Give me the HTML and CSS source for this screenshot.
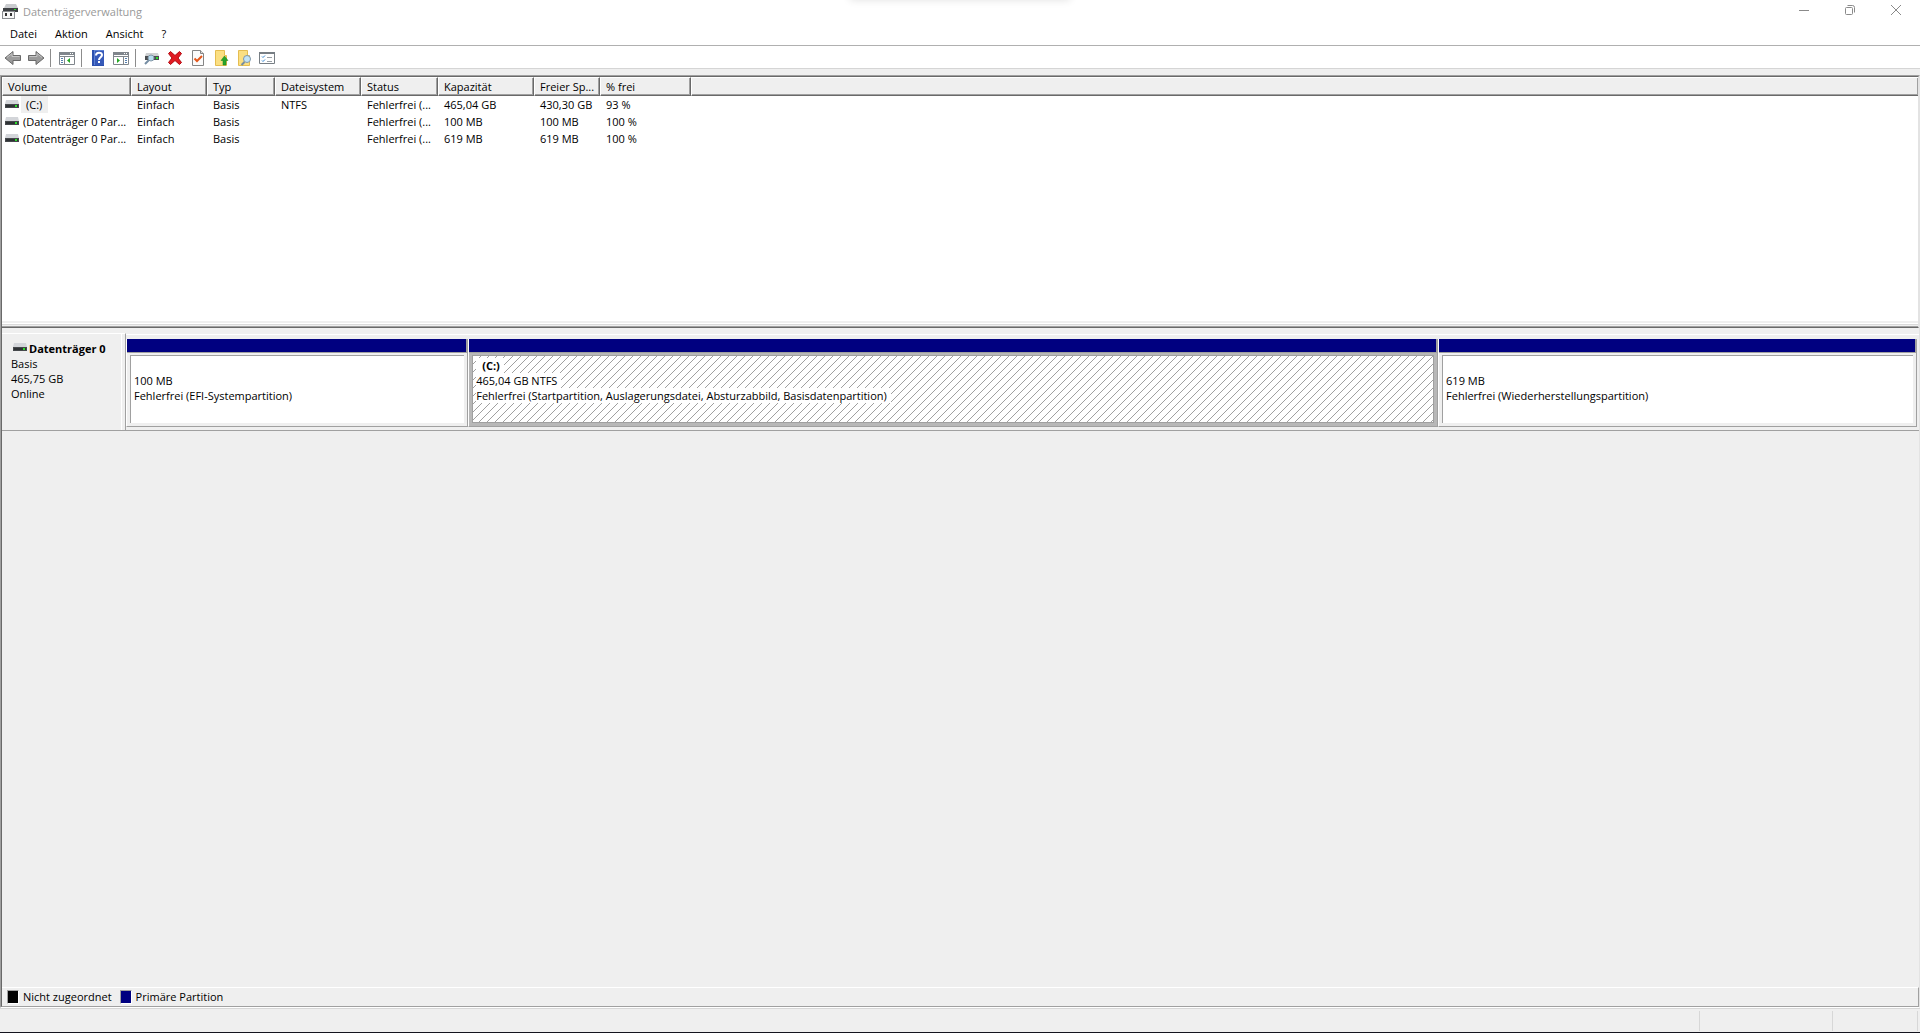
FILE: index.html
```html
<!DOCTYPE html>
<html lang="de">
<head>
    <meta charset="UTF-8">
    <meta name="viewport" content="width=device-width, initial-scale=1.0">
    <title>Datenträgerverwaltung</title>
    <link rel="stylesheet" href="styles.css">
</head>
<body>

    <!-- Shared disk symbol -->
    <svg class="symbols" width="0" height="0" aria-hidden="true">
        <symbol id="disk" viewBox="0 0 14 8">
            <path fill="#d3d5d9" d="M1 0h12l1 4H0z"/>
            <path fill="#46494c" d="M0 4h14v4H0z"/>
            <path fill="#2f3235" d="M1 5h12v2H1z"/>
            <path fill="#2be02b" d="M10 5h2v2h-2z"/>
        </symbol>
    </svg>

    <header class="title-bar">
        <svg class="app-icon" viewBox="0 0 16 16" aria-hidden="true">
            <path fill="#c9cbce" d="M4 0h10l2 4H2z"/>
            <path fill="#3e4144" d="M1 4h15v4H1z"/>
            <path fill="#2be02b" d="M12 5h2v1h-2z"/>
            <path fill="#8a8d90" d="M0 7h13v8H0z"/>
            <path fill="#f7f7f7" d="M1 8h11v6H1z"/>
            <path fill="#333" d="M3 9h2v3H3zM8 9h2v3H8z"/>
        </svg>
        <span class="title">Datenträgerverwaltung</span>
        <span class="title-shadow"></span>
        <div class="window-buttons">
            <button aria-label="Minimieren"><svg viewBox="0 0 12 12"><path d="M1 6.500h10"/></svg></button>
            <button aria-label="Verkleinern"><svg viewBox="0 0 12 12"><rect x="1.500" y="3.500" width="7" height="7" rx="1"/><path d="M3.500 1.500h5a2 2 0 0 1 2 2v5"/></svg></button>
            <button aria-label="Schließen"><svg viewBox="0 0 12 12"><path d="M1 1l10 10M11 1L1 11"/></svg></button>
        </div>
    </header>

    <nav class="menu-bar">
        <button>Datei</button>
        <button>Aktion</button>
        <button>Ansicht</button>
        <button>?</button>
    </nav>

    <div class="toolbar">
        <button aria-label="Zurück"><svg class="wide" viewBox="0 0 18 16"><path fill="#9b9b9b" stroke="#696969" d="M1 8l8-6.500v4h7.500v5H9v4z"/><path fill="none" stroke="#c4c4c4" d="M3 7.500l5-4v3h7.500"/></svg></button>
        <button aria-label="Vorwärts"><svg class="wide" viewBox="0 0 18 16"><path fill="#9b9b9b" stroke="#696969" d="M17 8L9 1.500v4H1.500v5H9v4z"/><path fill="none" stroke="#c4c4c4" d="M2.500 6.500H10v-3l5 4"/></svg></button>
        <span class="divider"></span>
        <button aria-label="Konsolenstruktur"><svg viewBox="0 0 16 16"><path fill="#fff" stroke="#80868c" d="M.5 2.500h15v12H.5z"/><path fill="#80868c" d="M0 2h16v3H0zM0 6h16v1H0zM5 7h1v8H5z"/><path fill="#fff" d="M11 3h1v1h-1zM13 3h1v1h-1z"/><path fill="#557fae" d="M2 8h2v1H2zM2 10h2v1H2zM2 12h2v1H2z"/><path fill="#23a823" d="M8 10.500L11 8v5z"/></svg></button>
        <span class="divider"></span>
        <button aria-label="Hilfe"><svg viewBox="0 0 16 16"><path fill="#2c50ae" d="M2 0h12v16H2z"/><path fill="#5b80d4" d="M4 0h10v15H4z"/><path fill="#3659b8" d="M5 1h9v14H5z"/><path fill="none" stroke="#fff" stroke-width="2" d="M6 5.500C6 1.500 12 2 12 5c0 2-3 2.500-3 5"/><path fill="#fff" d="M8 11h2v2H8z"/></svg></button>
        <button aria-label="Aktionsbereich"><svg viewBox="0 0 16 16"><path fill="#fff" stroke="#80868c" d="M.5 2.500h15v12H.5z"/><path fill="#80868c" d="M0 2h16v3H0zM0 6h16v1H0zM10 7h1v8h-1z"/><path fill="#fff" d="M11 3h1v1h-1zM13 3h1v1h-1z"/><path fill="#557fae" d="M12 8h2v1h-2zM12 10h2v1h-2zM12 12h2v1h-2z"/><path fill="#23a823" d="M7 10.500L4 8v5z"/></svg></button>
        <span class="divider"></span>
        <button aria-label="Datenträger prüfen"><svg viewBox="0 0 16 16"><path fill="#cfd1d3" d="M2 3h12l1 3H1z"/><path fill="#4a4d50" d="M1 6h14v4H1z"/><path fill="#2be02b" d="M12 7h2v2h-2z"/><path stroke="#758da3" stroke-width="2" d="M5 10l-4 4"/><circle cx="7" cy="8" r="3" fill="#b6dcf0" stroke="#8296a6"/></svg></button>
        <button aria-label="Löschen"><svg viewBox="0 0 16 16"><path fill="#e11a22" stroke="#b30910" d="M3.500 1.500L8 5.500l4.500-4 2 2L11 8l3.500 4.500-2 2L8 10.500l-4.500 4-2-2L5 8 1.500 3.500z"/></svg></button>
        <button aria-label="Eigenschaften"><svg viewBox="0 0 16 16"><path fill="#fbfbfb" stroke="#858585" d="M2.500.5h8l3 3v12h-11z"/><path fill="#ddd" stroke="#858585" d="M10.500.5v3h3"/><path fill="none" stroke="#e4571b" stroke-width="2" d="M4.500 8.500l2.500 2.500 5-5"/></svg></button>
        <button aria-label="Übergeordneter Ordner"><svg viewBox="0 0 16 16"><path fill="#fbdf82" stroke="#e5bd50" d="M2.500.5h9v5h2v10h-11z"/><path fill="#28a52b" stroke="#12851a" stroke-width=".5" d="M11.500 6l3.500 4.500h-2V15h-3v-4.500H8z"/></svg></button>
        <button aria-label="Ordner durchsuchen"><svg viewBox="0 0 16 16"><path fill="#fbdf82" stroke="#e5bd50" d="M2.500.5h9v5h2v10h-11z"/><path stroke="#758da3" stroke-width="2" d="M8.500 12L5.500 15"/><circle cx="11" cy="9" r="3.500" fill="#c3e4f6" stroke="#8197a8"/></svg></button>
        <button aria-label="Optionen"><svg viewBox="0 0 16 16"><path fill="#fff" stroke="#777e84" d="M.5 2.500h15v11H.5z"/><path fill="#777e84" d="M0 2h16v2H0z"/><path fill="none" stroke="#3386d1" d="M3 6.500l1 1 2-2M3 10.500l1 1 2-2"/><path fill="#999fa5" d="M8 7h5v1H8zM8 11h5v1H8z"/></svg></button>
    </div>

    <main class="console">
        <section class="volume-pane">
            <table class="volumes">
                <colgroup>
                    <col class="col-volume">
                    <col class="col-layout">
                    <col class="col-type">
                    <col class="col-fs">
                    <col class="col-status">
                    <col class="col-capacity">
                    <col class="col-free">
                    <col class="col-percent">
                    <col>
                </colgroup>
                <thead>
                    <tr>
                        <th>Volume</th>
                        <th>Layout</th>
                        <th>Typ</th>
                        <th>Dateisystem</th>
                        <th>Status</th>
                        <th>Kapazität</th>
                        <th>Freier Sp...</th>
                        <th>% frei</th>
                        <td class="filler"></td>
                    </tr>
                </thead>
                <tbody>
                    <tr>
                        <td class="name"><svg class="disk"><use href="#disk"/></svg><span class="selected">(C:)</span></td>
                        <td>Einfach</td>
                        <td>Basis</td>
                        <td>NTFS</td>
                        <td>Fehlerfrei (...</td>
                        <td>465,04 GB</td>
                        <td>430,30 GB</td>
                        <td>93 %</td>
                        <td></td>
                    </tr>
                    <tr>
                        <td class="name"><svg class="disk"><use href="#disk"/></svg><span>(Datenträger 0 Par...</span></td>
                        <td>Einfach</td>
                        <td>Basis</td>
                        <td></td>
                        <td>Fehlerfrei (...</td>
                        <td>100 MB</td>
                        <td>100 MB</td>
                        <td>100 %</td>
                        <td></td>
                    </tr>
                    <tr>
                        <td class="name"><svg class="disk"><use href="#disk"/></svg><span>(Datenträger 0 Par...</span></td>
                        <td>Einfach</td>
                        <td>Basis</td>
                        <td></td>
                        <td>Fehlerfrei (...</td>
                        <td>619 MB</td>
                        <td>619 MB</td>
                        <td>100 %</td>
                        <td></td>
                    </tr>
                </tbody>
            </table>
            <div class="splitter"></div>
        </section>

        <section class="disk-pane">
            <div class="disk-row">
                <div class="disk-label">
                    <div class="disk-name"><svg class="disk"><use href="#disk"/></svg><b>Datenträger 0</b></div>
                    <div>Basis</div>
                    <div>465,75 GB</div>
                    <div>Online</div>
                </div>
                <div class="partitions">
                    <div class="partition efi">
                        <div class="bar"></div>
                        <div class="body">
                            <div class="box">
                                <p>100 MB</p>
                                <p>Fehlerfrei (EFI-Systempartition)</p>
                            </div>
                        </div>
                    </div>
                    <div class="partition system active">
                        <div class="bar"></div>
                        <div class="body">
                            <div class="box">
                                <p class="letter"><b>(C:)</b></p>
                                <p>465,04 GB NTFS</p>
                                <p>Fehlerfrei (Startpartition, Auslagerungsdatei, Absturzabbild, Basisdatenpartition)</p>
                            </div>
                        </div>
                    </div>
                    <div class="partition recovery">
                        <div class="bar"></div>
                        <div class="body">
                            <div class="box">
                                <p>619 MB</p>
                                <p>Fehlerfrei (Wiederherstellungspartition)</p>
                            </div>
                        </div>
                    </div>
                </div>
            </div>
            <div class="legend">
                <span class="swatch unallocated"></span><span class="legend-text">Nicht zugeordnet</span>
                <span class="swatch primary"></span><span class="legend-text">Primäre Partition</span>
            </div>
        </section>
    </main>

    <footer class="status-bar">
        <span class="status-main"></span>
        <span class="status-mid"></span>
        <span class="status-end"></span>
    </footer>

</body>
</html>
```
FILE: styles.css
```css
* {
    box-sizing: border-box;
}

body {
    height: 100vh;
    margin: 0;
    overflow: hidden;
    display: flex;
    flex-direction: column;
    background: #efefef;
    color: #000;
    font-family: 'Open Sans', 'Noto Sans', sans-serif;
    font-size: 11px;
    line-height: 15px;
}

button {
    border: none;
    padding: 0;
    background: none;
    color: inherit;
    font: inherit;
}

p {
    margin: 0;
}

.symbols {
    position: absolute;
}

/* Title bar */
.title-bar {
    display: flex;
    align-items: center;
    height: 23px;
    padding: 0 1px 0 2px;
    background: #fff;
    color: #999;
}

.app-icon {
    width: 16px;
    height: 16px;
    margin-right: 5px;
}

.title-shadow {
    position: absolute;
    top: -10px;
    left: 50%;
    width: 220px;
    height: 10px;
    margin-left: -110px;
    box-shadow: 0 0 8px rgba(0, 0, 0, 0.12);
}

.window-buttons {
    display: flex;
    margin-left: auto;
}

.window-buttons button {
    width: 46px;
    height: 23px;
    display: flex;
    align-items: center;
    justify-content: center;
    padding-bottom: 3px;
}

.window-buttons svg {
    width: 12px;
    height: 12px;
    fill: none;
    stroke: #8a8a8a;
}

/* Menu */
.menu-bar {
    display: flex;
    gap: 18px;
    height: 23px;
    padding: 0 10px 1px;
    background: #fff;
    border-bottom: 1px solid #b0b0b0;
}

/* Toolbar */
.toolbar {
    display: flex;
    align-items: center;
    height: 23px;
    padding: 2px 1px 0;
    background: #fff;
    border-bottom: 1px solid #d5d5d5;
}

.toolbar button {
    display: flex;
    justify-content: center;
    width: 23px;
}

.toolbar svg {
    width: 16px;
    height: 16px;
}

.toolbar .wide {
    width: 18px;
}

.divider {
    width: 1px;
    height: 18px;
    margin: 0 4px 0 3px;
    background: #8c8c8c;
}

/* Console frame */
.console {
    flex: 1;
    display: flex;
    flex-direction: column;
    margin-top: 6px;
    border: 1px solid #a0a0a0;
    border-right-color: #e3e3e3;
    border-bottom-color: #fff;
}

.volume-pane {
    display: flex;
    flex-direction: column;
    height: 252px;
    background: #fff;
    border: 1px solid #696969;
    border-right-color: #e3e3e3;
}

.volumes {
    width: 100%;
    table-layout: fixed;
    border-collapse: separate;
    border-spacing: 0;
}

.col-volume { width: 129px; }
.col-layout { width: 76px; }
.col-type { width: 68px; }
.col-fs { width: 86px; }
.col-status { width: 77px; }
.col-capacity { width: 96px; }
.col-free { width: 66px; }
.col-percent { width: 91px; }

.volumes th,
.volumes .filler {
    height: 19px;
    padding: 0 0 1px 5px;
    background: #efefef;
    border-top: 1px solid #fff;
    border-left: 1px solid #fff;
    border-right: 1px solid #696969;
    border-bottom: 1px solid #696969;
    box-shadow: inset -1px -1px #a0a0a0;
    font-weight: normal;
    text-align: left;
    white-space: nowrap;
}

.volumes .filler {
    border-right: none;
}

.volumes tbody td {
    height: 17px;
    padding: 0 0 0 6px;
    white-space: nowrap;
}

.volumes tbody .name {
    display: flex;
    align-items: center;
    padding-left: 3px;
}

.disk {
    width: 14px;
    height: 8px;
    margin-right: 4px;
}

.name .selected {
    padding: 1px 6px 1px 5px;
    margin-left: -2px;
    background: #efefef;
}

.name .disk {
    margin-bottom: 1px;
}

.splitter {
    height: 6px;
    margin-top: auto;
    background: linear-gradient(#efefef 2px, #fff 2px, #fff 3px, #dadada 3px, #dadada 4px, #efefef 4px);
    border-bottom: 1px solid #a0a0a0;
}

/* Graphical view */
.disk-pane {
    flex: 1;
    display: flex;
    flex-direction: column;
    padding-top: 5px;
    border-left: 1px solid #696969;
    border-bottom: 1px solid #a0a0a0;
}

.disk-row {
    display: flex;
    height: 98px;
}

.disk-label {
    width: 124px;
    padding: 7px 0 0 9px;
    border-top: 1px solid #fff;
    border-right: 1px solid #a0a0a0;
    border-bottom: 1px solid #a0a0a0;
    box-shadow: inset -3px 0 #efefef, inset -4px 0 #fff;
}

.disk-name {
    display: flex;
    align-items: center;
}

.disk-name .disk {
    margin: 0 2px 3px;
}

.partitions {
    flex: 1;
    display: flex;
    margin-top: 1px;
    padding: 4px 2px 3px 0;
    border-top: 1px solid #fff;
    border-bottom: 1px solid #a0a0a0;
}

.partition {
    display: flex;
    flex-direction: column;
    min-width: 0;
    border-left: 1px solid #fff;
    border-right: 1px solid #a0a0a0;
    border-bottom: 1px solid #a0a0a0;
}

.efi { flex: 341; }
.system { flex: 970; }
.recovery { flex: 478; }

.bar {
    height: 14px;
    background: #000080;
    border-right: 1px solid #a0a0a0;
    border-bottom: 1px solid #a0a0a0;
}

.body {
    flex: 1;
    display: flex;
    padding: 2px 3px 3px;
}

.box {
    flex: 1;
    padding: 17px 0 0 3px;
    overflow: hidden;
    background: #fff;
    border-top: 1px solid #a0a0a0;
    border-left: 1px solid #a0a0a0;
    white-space: nowrap;
}

.active .body {
    background: #b8b8b8;
}

.active .box {
    padding-top: 2px;
    border: 1px solid #a0a0a0;
    background: #fff url("data:image/svg+xml,%3Csvg xmlns='http://www.w3.org/2000/svg' width='8' height='8' shape-rendering='crispEdges'%3E%3Cpath fill='%23a0a0a0' d='M7 0h1v1H7zM6 1h1v1H6zM5 2h1v1H5zM4 3h1v1H4zM3 4h1v1H3zM2 5h1v1H2zM1 6h1v1H1zM0 7h1v1H0z'/%3E%3C/svg%3E");
}

.active p {
    width: max-content;
    padding-right: 4px;
    background: #fff;
}

.active .letter {
    padding-left: 6px;
}

.legend {
    display: flex;
    align-items: center;
    height: 19px;
    margin-top: auto;
    padding: 0 0 1px 5px;
    border-top: 1px solid #fff;
    border-right: 1px solid #a0a0a0;
}

.swatch {
    width: 12px;
    height: 14px;
    margin-right: 4px;
    border: 1px solid #a0a0a0;
    border-right-color: #fff;
    border-bottom-color: #fff;
}

.unallocated {
    background: #000;
}

.primary {
    background: #000080;
}

.legend-text {
    margin-right: 8px;
}

/* Status bar */
.status-bar {
    display: flex;
    height: 25px;
    padding: 2px 2px 1px 0;
    border-top: 1px solid #d7d7d7;
    border-bottom: 1px solid #14141e;
}

.status-bar span {
    border-right: 1px solid #d7d7d7;
}

.status-main { flex: 1; }
.status-mid { width: 133px; }
.status-end { width: 85px; }
```
